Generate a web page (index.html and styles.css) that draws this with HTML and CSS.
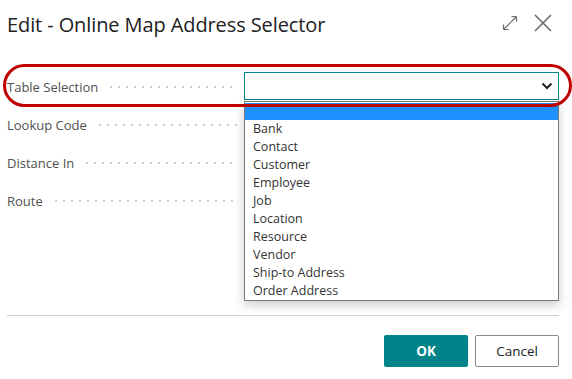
FILE: index.html
```html
<!DOCTYPE html>
<html lang="en">
<head>
    <meta charset="UTF-8">
    <title>Edit - Online Map Address Selector</title>
    <link rel="stylesheet" href="styles.css">
</head>
<body>
    <div class="dialog">
        <div class="header">
            <h1>Edit - Online Map Address Selector</h1>
            <div class="header-icons">
                <svg class="icon" width="18" height="18" viewBox="0 0 18 18">
                    <path d="M2.5 15.5 L15.5 2.5 M2.5 15.5 V10.5 M2.5 15.5 H7.5 M15.5 2.5 H10.5 M15.5 2.5 V7.5" fill="none" stroke="#6b6b6b" stroke-width="1.2"/>
                </svg>
                <svg class="icon" width="18" height="18" viewBox="0 0 18 18">
                    <path d="M1 1 L17 17 M17 1 L1 17" fill="none" stroke="#6b6b6b" stroke-width="1.6"/>
                </svg>
            </div>
        </div>

        <div class="form">
            <div class="row">
                <div class="label"><span>Table Selection</span><span class="dots"></span></div>
                <div class="field">
                    <div class="select">
                        <svg width="12" height="8" viewBox="0 0 12 8">
                            <path d="M1.5 1.5 L6 6 L10.5 1.5" fill="none" stroke="#222" stroke-width="2"/>
                        </svg>
                    </div>
                    <ul class="options">
                        <li class="selected">&nbsp;</li>
                        <li>Bank</li>
                        <li>Contact</li>
                        <li>Customer</li>
                        <li>Employee</li>
                        <li>Job</li>
                        <li>Location</li>
                        <li>Resource</li>
                        <li>Vendor</li>
                        <li>Ship-to Address</li>
                        <li>Order Address</li>
                    </ul>
                </div>
                <div class="highlight"></div>
            </div>
            <div class="row">
                <div class="label"><span>Lookup Code</span><span class="dots"></span></div>
            </div>
            <div class="row">
                <div class="label"><span>Distance In</span><span class="dots"></span></div>
            </div>
            <div class="row">
                <div class="label"><span>Route</span><span class="dots"></span></div>
            </div>
        </div>

        <div class="footer">
            <button class="btn btn-primary">OK</button>
            <button class="btn btn-secondary">Cancel</button>
        </div>
    </div>
</body>
</html>
```

FILE: styles.css
```css
* {
    margin: 0;
    padding: 0;
    box-sizing: border-box;
}

body {
    font-family: 'Open Sans', 'Noto Sans', sans-serif;
    background: white;
    color: #212121;
}

.dialog {
    padding: 0 13px 0 7px;
}

.header {
    display: flex;
    align-items: center;
    justify-content: space-between;
    height: 46px;
    padding-top: 3px;
}

.header h1 {
    font-size: 20px;
    font-weight: 500;
    color: #212121;
    letter-spacing: -0.1px;
}

.header-icons {
    display: flex;
    gap: 14px;
    margin-right: 7px;
    margin-top: -4px;
}

.header-icons .icon:first-child {
    margin-right: 1px;
}

.form {
    margin-top: 26px;
    display: flex;
    flex-direction: column;
    gap: 10px;
}

.row {
    position: relative;
    display: grid;
    grid-template-columns: 237px 1fr;
    height: 28px;
}

.label {
    display: flex;
    align-items: center;
    font-size: 13px;
    color: #505050;
    padding-right: 7px;
    padding-top: 2px;
}

.dots {
    flex: 1;
    height: 2px;
    margin-left: 12px;
    background-image: linear-gradient(to right, #cfcfcf 2px, transparent 2px);
    background-size: 8px 2px;
    background-repeat: repeat-x;
}

.field {
    position: relative;
}

.select {
    height: 28px;
    border: 1px solid #008489;
    display: flex;
    align-items: center;
    justify-content: flex-end;
    padding-right: 5px;
}

.options {
    list-style: none;
    position: absolute;
    top: 29px;
    left: 0;
    right: 0;
    background: white;
    border: 1px solid #7a7a7a;
    box-shadow: 0 4px 10px rgba(0, 0, 0, 0.2);
    z-index: 2;
}

.options li {
    font-size: 12.5px;
    line-height: 18px;
    padding-left: 8px;
    color: #333;
}

.options li.selected {
    background: #1e90ff;
    height: 17px;
    margin-top: 1px;
}

.highlight {
    position: absolute;
    left: -4px;
    top: -8px;
    right: -13px;
    bottom: -7px;
    border: 3px solid #c00000;
    border-radius: 22px;
    z-index: 3;
}

.footer {
    margin-top: 101px;
    border-top: 1px solid #d0d0d0;
    padding-top: 19px;
    display: flex;
    justify-content: flex-end;
    gap: 7px;
}

.btn {
    width: 84px;
    height: 32px;
    font-family: 'Open Sans', 'Noto Sans', sans-serif;
    font-size: 13.5px;
    border-radius: 2px;
    cursor: pointer;
}

.btn-primary {
    background: #008489;
    color: white;
    border: none;
    font-weight: 700;
}

.btn-secondary {
    background: white;
    color: #212121;
    border: 1px solid #8a8a8a;
}
```
